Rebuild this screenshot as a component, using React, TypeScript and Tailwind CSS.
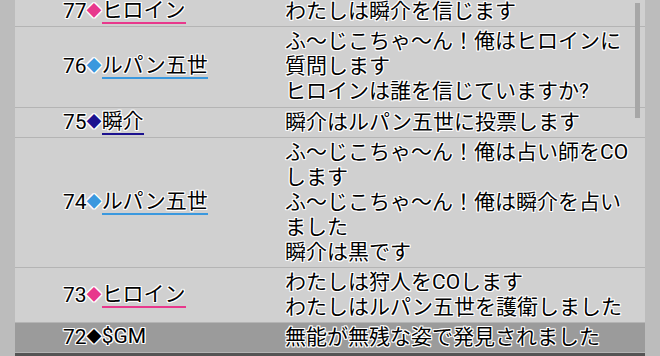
import React from 'react';

type Log = {
  no: number;
  name: string;
  color: string;
  lines: string[];
  gm?: boolean;
};

const logs: Log[] = [
  { no: 77, name: 'ヒロイン', color: 'pink', lines: ['わたしは瞬介を信じます'] },
  {
    no: 76,
    name: 'ルパン五世',
    color: 'blue',
    lines: ['ふ〜じこちゃ〜ん！俺はヒロインに', '質問します', 'ヒロインは誰を信じていますか?'],
  },
  { no: 75, name: '瞬介', color: 'navy', lines: ['瞬介はルパン五世に投票します'] },
  {
    no: 74,
    name: 'ルパン五世',
    color: 'blue',
    lines: ['ふ〜じこちゃ〜ん！俺は占い師をCO', 'します', 'ふ〜じこちゃ〜ん！俺は瞬介を占い', 'ました', '瞬介は黒です'],
  },
  {
    no: 73,
    name: 'ヒロイン',
    color: 'pink',
    lines: ['わたしは狩人をCOします', 'わたしはルパン五世を護衛しました'],
  },
  { no: 72, name: '$GM', color: 'black', lines: ['無能が無残な姿で発見されました'], gm: true },
];

const diamond: Record<string, string> = {
  pink: 'text-[#e8388c]',
  blue: 'text-[#3a98de]',
  navy: 'text-[#1c128f]',
  black: 'text-black',
};

const underline: Record<string, string> = {
  pink: 'border-[#e8388c]',
  blue: 'border-[#3a98de]',
  navy: 'border-[#1c128f]',
  black: 'border-transparent',
};

const outline =
  '[text-shadow:1px_0_0_#fff,-1px_0_0_#fff,0_1px_0_#fff,0_-1px_0_#fff,1px_1px_0_#fff,-1px_-1px_0_#fff,1px_-1px_0_#fff,-1px_1px_0_#fff]';

export default function App() {
  return (
    <div
      className="flex h-[356px] w-[660px] overflow-hidden bg-[#bdbdbd] text-black"
      style={{ fontFamily: 'Roboto, "Noto Sans CJK JP", sans-serif' }}
    >
      <div className="w-[15px] shrink-0 bg-[#bcbcbc]" />
      <div className="relative flex w-[630px] flex-col bg-[#545454]">
        <div className="-mt-[3px] flex flex-col">
          {logs.map((log) => (
            <div
              key={log.no}
              className={`flex border-b border-[#b4b4b4] py-[2px] text-[21px] leading-[25px] ${
                log.gm ? 'bg-[#9b9b9b]' : 'bg-[#d0d0d0]'
              } ${log.no === 76 ? 'pb-[3px]' : ''} ${outline}`}
            >
              <div className="flex w-[270px] shrink-0 items-center pl-[48px]">
                <span>{log.no}</span>
                <span className={`text-[15px] ${diamond[log.color]}`}>◆</span>
                <span className={`border-b-2 leading-[23px] ${underline[log.color]}`}>{log.name}</span>
              </div>
              <div className="flex flex-col">
                {log.lines.map((line, i) => (
                  <span key={i}>{line}</span>
                ))}
              </div>
            </div>
          ))}
        </div>
        <div className="absolute right-[5px] top-[3px] h-[115px] w-[5px] bg-[#a7a7a7]" />
      </div>
      <div className="flex-1 bg-[#bcbcbc]" />
    </div>
  );
}
